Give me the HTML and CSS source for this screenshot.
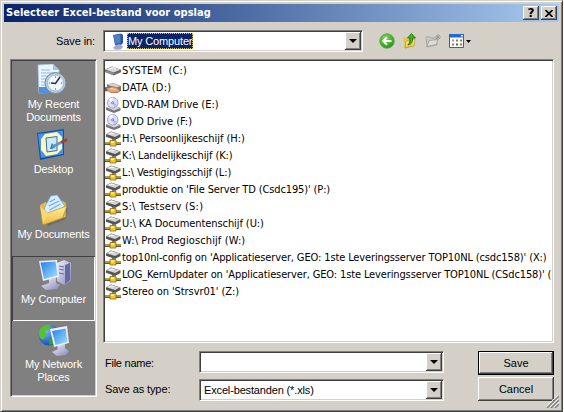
FILE: index.html
```html
<!DOCTYPE html>
<html lang="nl">
<head>
<meta charset="utf-8">
<title>Selecteer Excel-bestand voor opslag</title>
<link rel="stylesheet" href="styles.css">
</head>
<body>
<svg class="defs" width="0" height="0">
  <defs>
    <linearGradient id="scr" x1="0" y1="0" x2="1" y2="1"><stop offset="0" stop-color="#2a7de8"/><stop offset="1" stop-color="#9fe4ff"/></linearGradient>
    <linearGradient id="lilac" x1="0" y1="0" x2="1" y2="1"><stop offset="0" stop-color="#f2f2ff"/><stop offset="1" stop-color="#8586b8"/></linearGradient>
    <linearGradient id="yellow" x1="0" y1="0" x2="0" y2="1"><stop offset="0" stop-color="#fff3a0"/><stop offset="1" stop-color="#edb93c"/></linearGradient>
    <radialGradient id="globe" cx=".35" cy=".3" r=".8"><stop offset="0" stop-color="#7db4ff"/><stop offset="1" stop-color="#0a3fae"/></radialGradient>
    <radialGradient id="green" cx=".4" cy=".3" r=".8"><stop offset="0" stop-color="#7ed957"/><stop offset="1" stop-color="#1c8a17"/></radialGradient>
    <symbol id="disk" viewBox="0 0 16 16">
      <path d="M0 6.500 7 3.500l9 3.200v2.600L8.500 12.500 0 9z" fill="#666"/>
      <path d="M.5 6.500 7 4l8.300 2.800L8.500 9.500z" fill="#d8d8d8"/>
      <path d="M.5 7.200 8.500 10v2L.5 9z" fill="#929292"/>
      <path d="M4 6.200 8 4.700l3 1.200" stroke="#fff" fill="none"/>
      <path d="M11 10.300h2" stroke="#3fae3a"/>
    </symbol>
    <symbol id="shared" viewBox="0 0 16 16">
      <path d="M2 4.500 8 3l8 3v5l-6 2-8-4z" fill="#777"/>
      <path d="M2.500 4.500 8 3.300l7.300 2.900L10 8z" fill="#d5d5d5"/>
      <path d="M0 7.500h4l4-1 4 1.500 3 2-2 2.500H6L3.500 11H0z" fill="#e9a271" stroke="#a85c34" stroke-width=".7"/>
      <path d="M0 7.500h2.200V11H0z" fill="#666"/>
      <path d="m5 8.500 6 1" stroke="#ffd7b8"/>
    </symbol>
    <symbol id="dvd" viewBox="0 0 16 16">
      <path d="M1 10.500 7 8l8.500 3v2.500L9 16l-8-3z" fill="#777"/>
      <path d="m1.500 10.500 6-2 7.500 2.600-6 2.400z" fill="#d9d9de"/>
      <circle cx="7.700" cy="5.800" r="5.300" fill="#dce1f6" stroke="#8e94b8" stroke-width=".8"/>
      <path d="M7.700 5.800 4 2.300A5 5 0 0 1 7.700.8z" fill="#fff"/>
      <path d="m7.700 5.800 4.500 2a5 5 0 0 1-3 2.500z" fill="#b7b9ee"/>
      <circle cx="7.700" cy="5.800" r="1.500" fill="#7779cf"/><circle cx="7.700" cy="5.800" r=".6" fill="#fff"/>
    </symbol>
    <symbol id="net" viewBox="0 0 16 16">
      <path d="M1 3.500 6 .5l9.500 3V6L10 9 1 5.800z" fill="#555"/>
      <path d="M1.500 3.300 6 1l8.800 2.600L10 6z" fill="#d4d4d8"/>
      <path d="m4 3.200 3-1.200 2 .7" stroke="#fff" fill="none"/>
      <path d="M8 8v3" stroke="#777" stroke-width="2"/>
      <path d="M0 12.500h16" stroke="#555" stroke-width="3"/>
      <path d="M0 12h16" stroke="#e8c82e" stroke-width="1.200"/>
      <path d="M5 9.500h6V15H5z" fill="#f2c928" stroke="#8b6a0e" stroke-width=".8"/>
      <path d="M6 10.500h3v1.500H6z" fill="#fff3a0"/>
    </symbol>
  </defs>
</svg>
<div class="window">
  <header class="titlebar">
    <span class="title">Selecteer Excel-bestand voor opslag</span>
    <span class="winbtn">?</span>
    <span class="winbtn"><svg width="8" height="7" viewBox="0 0 8 7"><path d="m.5 0 7 7m0-7-7 7" stroke="#000" stroke-width="1.600"/></svg></span>
  </header>

  <div class="lookin">
    <label class="lookin-label">Save in:</label>
    <div class="combo lookin-combo">
      <svg class="pc" width="14" height="17" viewBox="0 0 14 17"><path d="M2 2 10 .5 12 2v8l-3 3-5-1z" fill="#27569e"/><path d="m2.500 2.500 7-1v8.500l-5 1z" fill="#4d80c4"/><path d="m5 12 4-1 3 3-2 2.500-6 .3-2-2z" fill="#a3a8d3"/></svg>
      <span class="picked">My Computer</span>
      <i class="drop"></i>
    </div>
    <div class="tools">
      <svg width="16" height="16" viewBox="0 0 16 16"><circle cx="8" cy="8" r="7.300" fill="url(#green)" stroke="#5aa94c" stroke-width=".8"/><path d="M12.500 8H4.500M8 4.200 4.200 8 8 11.800" fill="none" stroke="#fff" stroke-width="2"/></svg>
      <svg width="16" height="16" viewBox="0 0 16 16"><path d="M1 5l4-1 1 1 6-1v9l-9 2.500z" fill="#ecc24b"/><path d="m3 15 1-7 9-2-1 7z" fill="url(#yellow)" stroke="#b78c20" stroke-width=".6"/><path d="M6 12c4-1 5-4 4.500-7H13.500L9.500.5 5.500 5h2.300c.4 3-.3 5-1.800 7z" fill="#3fb51f" stroke="#17720c" stroke-width=".8"/></svg>
      <svg width="16" height="16" viewBox="0 0 16 16"><path d="M1 4h4l1 1h6v7l-10 2z" fill="#cbc9c4" stroke="#aaa7a0"/><path d="m2 13.500 2-6 9-1-2 5z" fill="#dedcd7" stroke="#aaa7a0"/><path d="M13 1v6m-3-3h6m-5-2 4 4m0-4-4 4" stroke="#999" stroke-width=".9"/></svg>
      <svg class="views" width="24" height="16" viewBox="0 0 24 16"><path d="M.5 1.500h14v13H.5z" fill="#fff" stroke="#2562bd"/><path d="M0 1h15v3.500H0z" fill="#2368cf"/><path d="M12 2h2v1.500h-2z" fill="#fff"/><g fill="#7aa5d8"><path d="M3 6.500h2v2H3z"/><path d="M11 6.500h2v2h-2z" fill="#4a9c65"/><path d="M7 6.500h2v2H7zM3 10.500h2v2H3z" fill="#9c6a7b"/><path d="M7 10.500h2v2H7z" fill="#377844"/><path d="M11 10.500h2v2h-2z" fill="#d0622c"/></g><path d="M17 7h5l-2.500 3z"/></svg>
    </div>
  </div>

  <div class="middle">
    <nav class="places">
      <div class="place">
        <svg class="nudge" width="34" height="32" viewBox="0 0 34 32"><path d="m4 1 15-1 6 6v22L5 29z" fill="#edf5ff" stroke="#a8c8ed" stroke-width=".8"/><path d="M19 0v6h6z" fill="#9fc3ec"/><path d="M7 6h9M7 9h14M7 12h10M7 15h8M7 18h7M7 21h7" stroke="#92b7ea"/><path d="M5 23h18v6H5z" fill="#4d91df"/><circle cx="21.500" cy="19" r="10.500" fill="#bacbd9" stroke="#71899d"/><circle cx="21.500" cy="19" r="8" fill="#eef8fd" stroke="#8fa9ba" stroke-width=".7"/><path d="m26 13-4.500 6.500L17 19" fill="none" stroke="#234" stroke-width="1.500"/><path d="M21.500 12.500v1m0 11v1m-6.500-6.500h1m11 0h1" stroke="#345"/></svg>
        <span>My Recent<br>Documents</span>
      </div>
      <div class="place">
        <svg class="nudge" width="34" height="32" viewBox="0 0 34 32"><path d="m3 4 27-4v26L6 31z" fill="#164fa8"/><path d="m4 5 25-3.500v23.500L7 29z" fill="#4594e6"/><path d="m11 5 12-2 5 5v12l-5 5-11 2-5-6V10z" fill="#fff8bd"/><path d="m12 9 11-1.500v14L13 23z" fill="#cce8fb" stroke="#356eae"/><path d="m16 20 2-6 3 5z" fill="#2767a9"/><path d="m18 18 9-4.500" stroke="#5c98cd" stroke-width="3"/><path d="m27 13.500 6-3" stroke="#a83c26" stroke-width="3"/></svg>
        <span>Desktop</span>
      </div>
      <div class="place">
        <svg width="30" height="32" viewBox="5 0 28 32" preserveAspectRatio="none"><path d="m9 26 10-5 13-8-2 12-16 7z" fill="#555" opacity=".5"/><path d="m6 11 5-3 3 2 13-3 3 2v14L8 30z" fill="#e5b949"/><path d="m10 14 6-12 6-1 7 11-8 9-10 3z" fill="#d6edff" stroke="#76afdc" stroke-width=".8"/><path d="m15 8 5-3m-6 7 10-5m-9 9 10-6" stroke="#74acdf"/><path d="m6 12 7 7 18-7-4 12-18 7z" fill="url(#yellow)" stroke="#bd8e25" stroke-width=".7"/><path d="m6 12 3 18 4-11z" fill="#f6da76"/></svg>
        <span>My Documents</span>
      </div>
      <div class="place current">
        <svg width="34" height="32" viewBox="0 0 34 32"><path d="m20 4 7-3 7 3v18l-7 4-7-4z" fill="url(#lilac)"/><path d="m28 6 5-2v17l-5 4z" fill="#6668a3"/><path d="m22 7 5 1m-5 2 5 1m-5 3 5 1" stroke="#666b9c"/><path d="m12 20 7-1v5l4 2-3 4-11 1-5-4 8-3z" fill="url(#lilac)"/><path d="m2 2 18-1 2 17-16 4z" fill="#eeefff"/><path d="m3.500 3.500 15-1 2 14-13.500 3.500z" fill="url(#scr)"/></svg>
        <span>My Computer</span>
      </div>
      <div class="place">
        <svg width="34" height="32" viewBox="0 0 34 32"><circle cx="12" cy="11" r="10.500" fill="url(#globe)"/><path d="M3 5c3-4 8-5 11-4l-2 5-4 1 2 4-4 5-3-2-1-4z" fill="#55c22e"/><path d="m12 14 5 1v5l-5 1z" fill="#2ca529"/><path d="m20 21 8-1v4l4 3-3 4-9 1-5-4 6-3z" fill="url(#lilac)"/><path d="m13 5 17-3 2 17-15 4z" fill="#f0f1ff"/><path d="m15 7 13.500-2.500 2 13.500-12 3z" fill="url(#scr)"/></svg>
        <span>My Network<br>Places</span>
      </div>
    </nav>

    <ul class="files">
      <li class="loose"><svg><use href="#disk"/></svg><span>SYSTEM &nbsp;(C:)</span></li>
      <li class="looser"><svg><use href="#shared"/></svg><span>DATA (D:)</span></li>
      <li class="normal"><svg><use href="#dvd"/></svg><span>DVD-RAM Drive (E:)</span></li>
      <li class="normal"><svg><use href="#dvd"/></svg><span>DVD Drive (F:)</span></li>
      <li class="normal"><svg><use href="#net"/></svg><span>H:\ Persoonlijkeschijf (H:)</span></li>
      <li class="snug"><svg><use href="#net"/></svg><span>K:\ Landelijkeschijf (K:)</span></li>
      <li class="snug"><svg><use href="#net"/></svg><span>L:\ Vestigingsschijf (L:)</span></li>
      <li class="tight"><svg><use href="#net"/></svg><span>produktie on 'File Server TD (Csdc195)' (P:)</span></li>
      <li class="looser"><svg><use href="#net"/></svg><span>S:\ Testserv (S:)</span></li>
      <li class="snug"><svg><use href="#net"/></svg><span>U:\ KA Documentenschijf (U:)</span></li>
      <li class="loose"><svg><use href="#net"/></svg><span>W:\ Prod Regioschijf (W:)</span></li>
      <li class="tight"><svg><use href="#net"/></svg><span>top10nl-config on 'Applicatieserver, GEO: 1ste Leveringsserver TOP10NL (csdc158)' (X:)</span></li>
      <li class="tight"><svg><use href="#net"/></svg><span>LOG_KernUpdater on 'Applicatieserver, GEO: 1ste Leveringsserver TOP10NL (CSdc158)' (</span></li>
      <li class="snug"><svg><use href="#net"/></svg><span>Stereo on 'Strsvr01' (Z:)</span></li>
    </ul>

    <div class="form">
      <label class="name-label">File name:</label>
      <div class="combo"><i class="drop"></i></div>
      <button class="btn default">Save</button>
      <label>Save as type:</label>
      <div class="combo"><span class="value">Excel-bestanden (*.xls)</span><i class="drop"></i></div>
      <button class="btn">Cancel</button>
    </div>
  </div>
  <svg class="grip" width="13" height="13" viewBox="0 0 13 13"><path d="M1 13 13 1M5 13l8-8M9 13l4-4" stroke="#808080" stroke-width="1.500"/><path d="M0 12 12 0M4 12l8-8M8 12l5-5" stroke="#fff"/></svg>
</div>
</body>
</html>
```
FILE: styles.css
```css
* { box-sizing: border-box; }
body { margin: 0; background: #fff; font: 11px/13px "Liberation Sans", Arial, sans-serif; color: #000; overflow: hidden; }
.defs { position: absolute; }
.window {
  position: relative; width: 563px; height: 412px; padding: 2px; background: #d4d0c8;
  border: 1px solid; border-color: #d4d0c8 #404040 #404040 #d4d0c8;
  box-shadow: inset 1px 1px #fff, inset -1px -1px #808080;
}
.titlebar {
  display: flex; align-items: center; height: 18px; margin: 1px 1px 0; padding-right: 2px;
  background: linear-gradient(90deg, #0a246a, #a6caf0);
}
.title { flex: 1; padding-left: 2px; color: #fff; font: bold 11px/16px "DejaVu Sans Condensed", "DejaVu Sans", sans-serif; font-stretch: condensed; white-space: nowrap; letter-spacing: .04px; }
.winbtn {
  display: flex; align-items: center; justify-content: center; width: 16px; height: 14px; margin-left: 2px;
  background: #d4d0c8; font: bold 12px/12px "DejaVu Sans", sans-serif;
  box-shadow: inset -1px -1px #404040, inset 1px 1px #fff, inset -2px -2px #808080;
}
.lookin { display: flex; align-items: center; height: 22px; margin-top: 8px; }
.lookin-label { width: 100px; padding-right: 8px; text-align: right; letter-spacing: -.1px; }
.combo {
  display: flex; align-items: center; height: 22px; padding: 1px; background: #fff;
  border: 1px solid; border-color: #808080 #fff #fff #808080;
  box-shadow: inset 1px 1px #404040, inset -1px -1px #d4d0c8;
}
.lookin-combo { width: 260px; }
.pc { margin-left: 6px; }
.picked { height: 16px; margin-left: 2px; padding: 0 1px; line-height: 16px; background: #0a246a; color: #fff; outline: 1px dotted #d8c070; outline-offset: -1px; white-space: nowrap; letter-spacing: -.15px; }
.drop {
  width: 16px; height: 18px; margin-left: auto; background: #d4d0c8; display: flex; align-items: center; justify-content: center;
  box-shadow: inset -1px -1px #404040, inset 1px 1px #fff, inset -2px -2px #808080;
}
.drop::before { content: ""; border: 4px solid transparent; border-top-color: #000; border-bottom: 0; }
.tools { display: flex; gap: 7px; margin-left: 16px; }
.tools .views { margin-left: 1px; }
.middle { display: grid; grid-template-columns: 87px 451px; grid-template-rows: 284px 50px; column-gap: 6px; row-gap: 8px; margin: 7px 0 0 7px; }
.places {
  grid-row: 1 / 3; height: 338px; padding: 1px; background: #808080; color: #fff;
  border: 1px solid; border-color: #808080 #fff #fff #808080;
  box-shadow: inset 1px 1px #404040, inset -1px -1px #d4d0c8;
}
.place { display: flex; flex-direction: column; align-items: center; height: 65px; padding-top: 3px; text-align: center; }
.place span { margin-top: 2px; letter-spacing: -.1px; white-space: nowrap; }
.place svg { flex: none; }
.place .nudge { margin-right: 5px; }
.current { box-shadow: inset 1px 1px #404040, inset -1px -1px #fff; }
.files {
  margin: 0; padding: 2px 1px; list-style: none; overflow: hidden; background: #fff;
  border: 1px solid; border-color: #808080 #fff #fff #808080;
  box-shadow: inset 1px 1px #404040, inset -1px -1px #d4d0c8;
  font: 11px/17px "DejaVu Sans Condensed", "DejaVu Sans", sans-serif; font-stretch: condensed;
}
.files li { display: flex; align-items: center; height: 17px; overflow: hidden; white-space: nowrap; }
.files svg { flex: none; width: 16px; height: 16px; margin-right: 1px; }
.looser { letter-spacing: .25px; }
.loose { letter-spacing: .1px; }
.normal { letter-spacing: -.03px; }
.snug { letter-spacing: -.085px; }
.tight { letter-spacing: -.13px; }
.form { display: grid; grid-template-columns: 96px 245px 76px; grid-template-rows: 24px 24px; row-gap: 2px; }
.form label { padding-left: 2px; line-height: 24px; letter-spacing: -.1px; }
.form .name-label { letter-spacing: -.25px; }
.form .combo { width: 245px; }
.form .btn { margin-left: 34px; width: 76px; }
.form .combo:nth-of-type(2) { margin-top: 2px; }
.value { padding-left: 3px; letter-spacing: -.15px; }
.btn {
  height: 24px; padding: 0; border: 0; background: #d4d0c8; font: 11px "Liberation Sans", Arial, sans-serif; color: #000;
  box-shadow: inset -1px -1px #404040, inset 1px 1px #fff, inset -2px -2px #808080;
}
.default { border: 1px solid #000; }
.grip { position: absolute; right: 3px; bottom: 3px; }
```
